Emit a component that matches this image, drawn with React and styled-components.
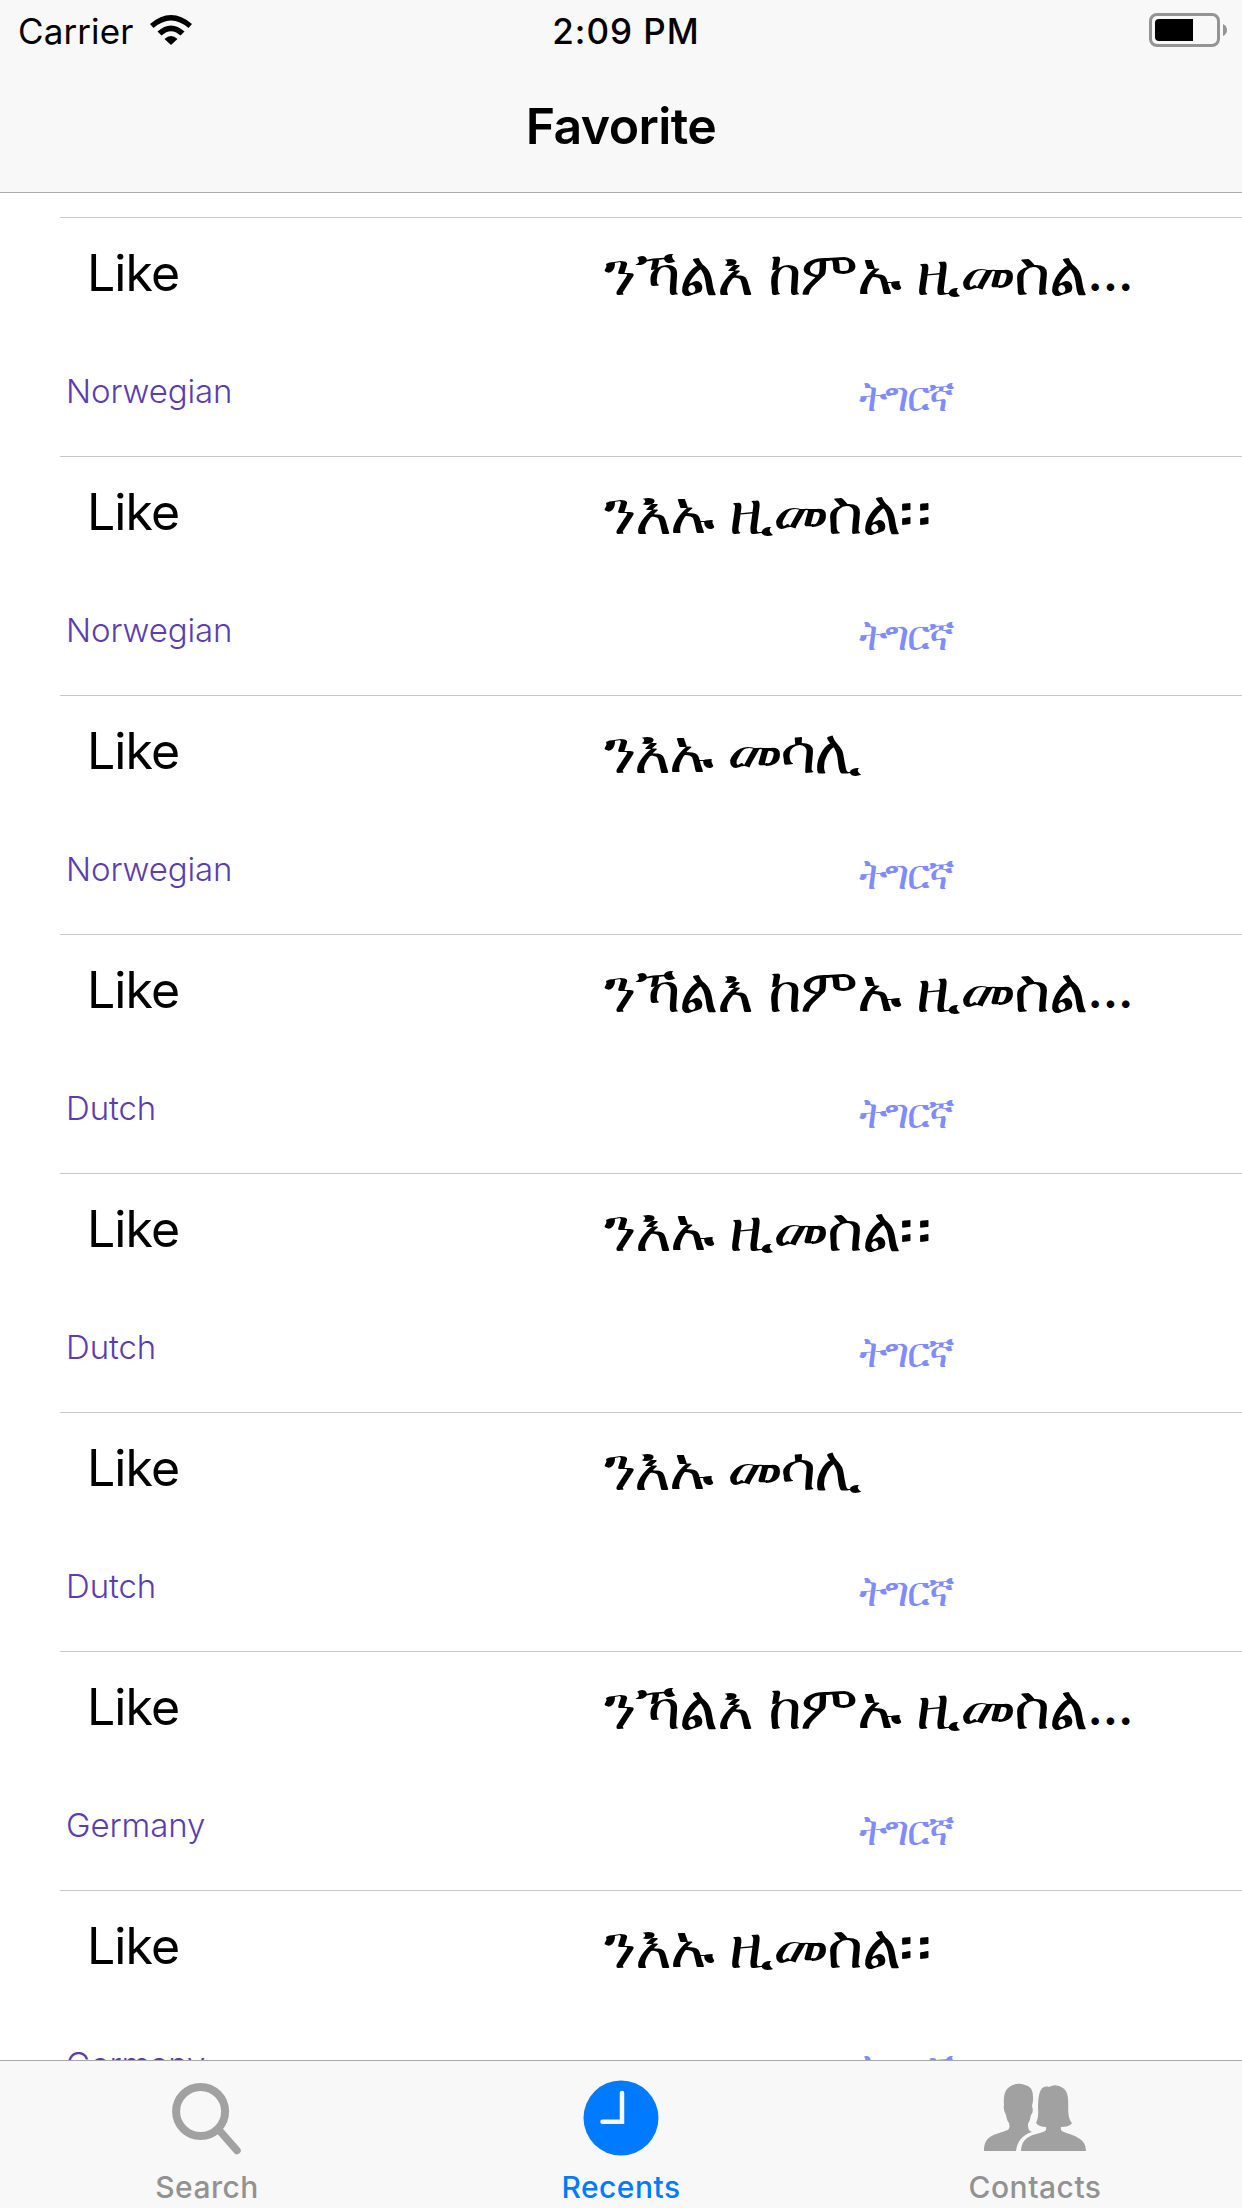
import React from "react";
import styled, { createGlobalStyle } from "styled-components";

const Global = createGlobalStyle`
  * { box-sizing: border-box; }
  body { margin: 0; background: #fff; }
`;

const Screen = styled.div`
  width: 1242px;
  height: 2208px;
  display: flex;
  flex-direction: column;
  overflow: hidden;
  background: #fff;
  color: #000;
  font-family: Inter, "Noto Sans", sans-serif;
`;

const Header = styled.header`
  flex: none;
  height: 193px;
  border-bottom: 1px solid #a9a9a9;
  background: #f8f8f8;
`;

const StatusBar = styled.div`
  height: 60px;
  padding: 0 15px 0 18px;
  display: grid;
  grid-template-columns: 1fr auto 1fr;
  align-items: center;
`;

const Carrier = styled.div`
  display: flex;
  align-items: center;
  gap: 17px;
  font-size: 35px;
  line-height: 60px;
  padding-top: 1px;
  letter-spacing: 0.1px;
`;

const WifiIcon = styled.svg`
  width: 42px;
  height: 30px;
  margin-top: -2px;
`;

const Time = styled.div`
  font-size: 35px;
  line-height: 60px;
  padding: 1px 0 0 7px;
  font-weight: 500;
  letter-spacing: 1px;
`;

const Battery = styled.svg`
  justify-self: end;
  margin-top: -1px;
`;

const Title = styled.h1`
  margin: 0;
  text-align: center;
  font-size: 50px;
  line-height: 132px;
  font-weight: 600;
  letter-spacing: -0.6px;
`;

const List = styled.main`
  flex: 1;
  min-height: 0;
  padding: 24px 0 0 60px;
  overflow: hidden;
`;

const Row = styled.article`
  height: 239px;
  border-top: 1px solid #c8c7cc;
  display: grid;
  grid-template-columns: 544px 1fr;
  grid-template-rows: 112px 126px;
`;

const Word = styled.div`
  padding-left: 27px;
  font-size: 50px;
  line-height: 110px;
  letter-spacing: -0.9px;
`;

const Translation = styled.div`
  font-size: 62px;
  line-height: 110px;
  letter-spacing: ${(p) => p.$tracking}px;
  white-space: nowrap;
`;

const Ellipsis = styled.span`
  margin-left: 1px;
  font-size: 48px;
  font-weight: 600;
  line-height: 1;
  letter-spacing: 0;
  vertical-align: 4px;
`;

const Stop = styled.span`
  letter-spacing: 3px;
`;

const Language = styled.div`
  padding-left: 6px;
  font-size: 33px;
  line-height: 122px;
  font-weight: 300;
  letter-spacing: -0.1px;
  color: #5b3db0;
`;

const Target = styled.div`
  padding: 5px 0 0 255px;
  font-size: 42px;
  line-height: 122px;
  letter-spacing: -1.9px;
  font-weight: 300;
  color: #7f8cff;
`;

const TabBar = styled.nav`
  flex: none;
  height: 148px;
  border-top: 1px solid #a9a9a9;
  background: #f8f8f8;
  display: grid;
  grid-template-columns: repeat(3, 1fr);
`;

const Tab = styled.div`
  display: flex;
  flex-direction: column;
  align-items: center;
  color: ${(p) => (p.$active ? "#007aff" : "#929292")};
  font-size: 30px;
  line-height: 40px;
  font-weight: 500;
  letter-spacing: 0.5px;
`;

const TabIcon = styled.svg`
  width: 110px;
  height: 106px;
  flex: none;
`;

const long = {
  tracking: -1.5,
  text: (
    <>
      ንኻልእ ከምኡ ዚመስል<Ellipsis>…</Ellipsis>
    </>
  ),
};
const mid = {
  tracking: -1.5,
  text: (
    <>
      ንእኡ ዚመስል<Stop>፡፡</Stop>
    </>
  ),
};
const short = { tracking: -2.2, text: "ንእኡ መሳሊ" };

const rows = [
  ["Norwegian", long],
  ["Norwegian", mid],
  ["Norwegian", short],
  ["Dutch", long],
  ["Dutch", mid],
  ["Dutch", short],
  ["Germany", long],
  ["Germany", mid],
];

const Wifi = () => (
  <WifiIcon viewBox="0 0 42 30">
    <path d="M0 9Q21-9 42 9L38.500 13Q21-2 3.500 13Z" />
    <path d="M7.500 16.500Q21 4.500 34.500 16.500L30.500 20.500Q21 12 11.500 20.500Z" />
    <path d="M14.500 24Q21 18 27.500 24L21 30Z" />
  </WifiIcon>
);

export default function App() {
  return (
    <Screen>
      <Global />
      <Header>
        <StatusBar>
          <Carrier>
            Carrier
            <Wifi />
          </Carrier>
          <Time>2:09 PM</Time>
          <Battery width="78" height="34" viewBox="0 0 78 34">
            <rect x="1.500" y="1.500" width="68" height="31" rx="6.500" fill="none" stroke="#949494" strokeWidth="3" />
            <path d="M10 6H44V28H10Q6 28 6 24V10Q6 6 10 6Z" />
            <path d="M74 11Q78 13 78 17T74 23Z" fill="#949494" />
          </Battery>
        </StatusBar>
        <Title>Favorite</Title>
      </Header>
      <List>
        {rows.map(([language, phrase], i) => (
          <Row key={i}>
            <Word>Like</Word>
            <Translation $tracking={phrase.tracking}>{phrase.text}</Translation>
            <Language>{language}</Language>
            <Target>ትግርኛ</Target>
          </Row>
        ))}
      </List>
      <TabBar>
        <Tab>
          <TabIcon viewBox="0 0 110 106">
            <circle cx="48.600" cy="50.500" r="24.500" fill="none" stroke="#a1a1a1" strokeWidth="8" />
            <path d="M67 69L85 89.500" stroke="#a1a1a1" strokeWidth="7.500" strokeLinecap="round" />
          </TabIcon>
          Search
        </Tab>
        <Tab $active>
          <TabIcon viewBox="0 0 110 106">
            <circle cx="55" cy="57" r="37.500" fill="#007aff" />
            <path d="M56 32V60.700H36.500" fill="none" stroke="#f8f8f8" strokeWidth="4.500" strokeLinecap="round" />
          </TabIcon>
          Recents
        </Tab>
        <Tab>
          <TabIcon viewBox="0 0 110 106">
            <g fill="#a1a1a1">
              <path d="M4 90C4 74 15 74 25 70C30 68 30 67 29 62Q27 60 26 54Q23 49 24 44Q23 33 27 28Q35 20 45 24Q54 25 53 40L52 45Q54 51 51 54Q50 60 48 63C48 68 49 70 52 71C42 74 37 81 36 90Z" />
              <path d="M41 90C42 74 55 74 63 71Q67 70 66 66Q59 66 56 62Q59 56 58 47C58 34 60 23 69 26Q76 22 83 27C93 34 84 53 92 62Q90 66 81 66Q80 70 84 71C94 75 106 77 106 90Z" />
            </g>
          </TabIcon>
          Contacts
        </Tab>
      </TabBar>
    </Screen>
  );
}
